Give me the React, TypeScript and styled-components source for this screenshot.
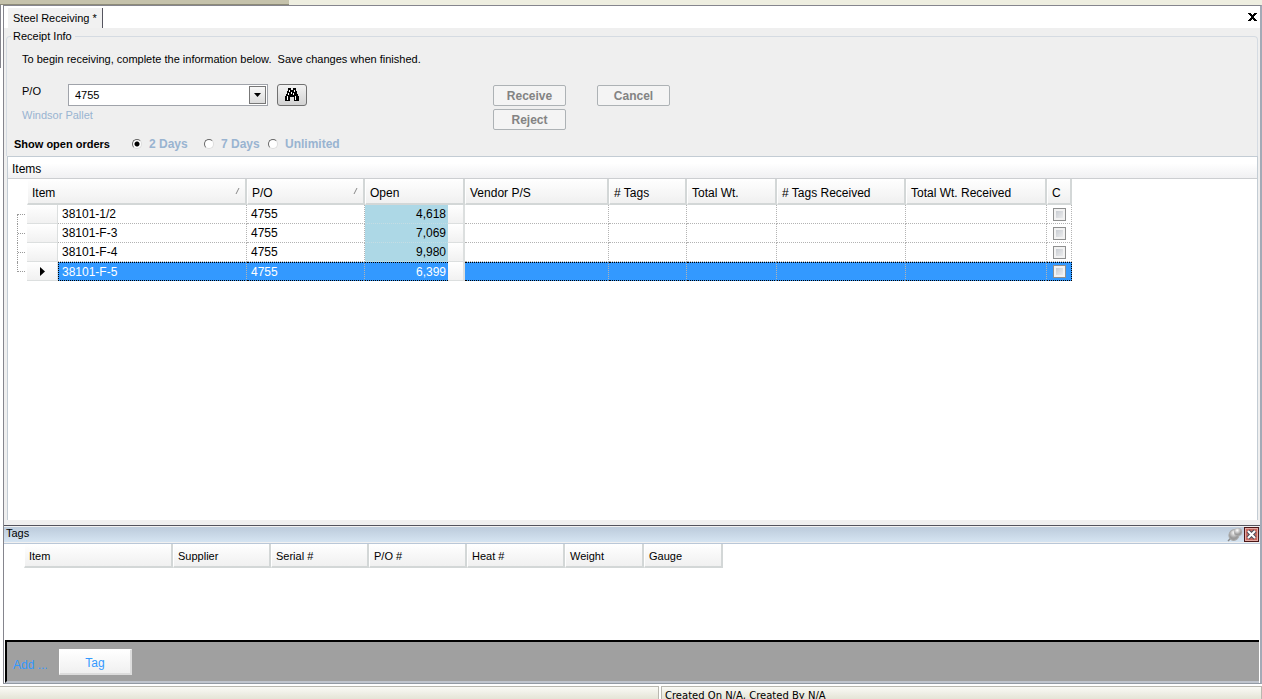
import React from 'react';
import styled, { createGlobalStyle, css } from 'styled-components';

const Global = createGlobalStyle`
  * { box-sizing: border-box; }
  html, body, #root { height: 100%; }
  body { margin: 0; overflow: hidden; background: #fff; color: #000;
    font-family: "Liberation Sans", Arial, sans-serif; font-size: 12px; line-height: 14px; }
  button, input { font: inherit; }
`;

const Page = styled.div`display: flex; flex-direction: column; height: 100vh; min-height: 520px;`;

const TopEdge = styled.div`
  display: flex; flex: none; height: 5px; background: #eeeee0;
  &::before { content: ""; width: 289px; background: #c5c2ab; border-bottom: 1px solid #8d8b78; }
`;

const Workspace = styled.div`display: flex; flex: 1; min-height: 0; background: #fff;`;

const LeftRail = styled.div`
  flex: none; width: 3px;
  &::before { content: ""; display: block; height: 63px; width: 1px; background: #85858d; }
`;

const Frame = styled.main`
  flex: 1; min-width: 0; display: flex; flex-direction: column; background: #efefef;
  border: 1px solid #85858d; border-right: 2px solid #a3aab6; border-bottom-color: #929aa4;
`;

const TabStrip = styled.nav`
  flex: none; display: flex; justify-content: space-between; align-items: stretch;
  height: 22px; background: #fff; padding: 2px 1px 0 4px;
`;

const Tab = styled.button`
  border: 0; border-right: 1px solid #55555f; background: #f1f1f1; padding: 0 5px; font-size: 11px; color: #000;
`;

const CloseTab = styled.button`
  border: 0; background: none; width: 14px; padding: 0 0 3px; display: grid; place-items: center;
`;

const ReceiptInfo = styled.fieldset`
  flex: none; margin: 0 2px; padding: 0 0 4px; border: 1px solid #d5dbe2; border-bottom: 0;
  border-radius: 4px 4px 0 0; min-width: 0; font-size: 11px;
`;

const Legend = styled.legend`margin-left: 4px; padding: 0 3px 0 2px; height: 16px; line-height: 16px;`;

const Intro = styled.p`margin: 0; padding: 8px 0 0 15px; white-space: pre;`;

const EntryRow = styled.div`display: flex; padding: 18px 15px 0; height: 70px;`;

const OrderLabel = styled.div`
  width: 46px; white-space: nowrap;
  label { display: block; }
`;

const Supplier = styled.div`color: #99b4d1; margin-top: 10px;`;

const Combo = styled.div`
  display: flex; width: 200px; height: 22px; border: 1px solid #a0a3aa; background: #fff; padding: 1px;
  input { flex: 1; min-width: 0; border: 0; outline: 0; padding: 0 5px; background: none; }
`;

const Drop = styled.button`
  width: 17px; padding: 0; border: 1px solid #777; background: linear-gradient(#f8f8f8, #dcdcdc);
  display: grid; place-items: center;
`;

const Find = styled.button`
  margin-left: 9px; width: 30px; height: 22px; padding: 0; border: 1px solid #707070; border-radius: 3px;
  background: linear-gradient(#f2f2f2, #d2d2d2); display: grid; place-items: center;
`;

const Commands = styled.div`
  margin-left: 186px; padding-top: 1px; display: grid; grid-template-columns: 73px 73px; column-gap: 31px; row-gap: 3px;
  align-content: start;
`;

const Command = styled.button`
  height: 21px; padding: 0; border: 1px solid #adb2b5; border-radius: 2px; background: #f4f4f4;
  color: #838383; font-size: 12px; font-weight: bold;
`;

const OpenOrders = styled.div`
  display: flex; align-items: center; padding-left: 7px; height: 16px; font-weight: bold;
`;

const OpenTitle = styled.span`width: 118px;`;

const RadioLabel = styled.label<{ $width: number }>`
  display: flex; align-items: center; gap: 7px; width: ${p => p.$width}px; color: #99b4d1; white-space: nowrap;
  font-size: 12px;
  input {
    appearance: none; margin: 0; width: 10px; height: 10px; border-radius: 50%; background: #fff;
    border: 1px solid; border-color: #666 #ddd #ddd #666;
  }
  input:checked { background: radial-gradient(circle, #000 0 2px, #fff 3px); }
`;

const ItemsPanel = styled.section`
  flex: 1; min-height: 0; margin: 0 2px 0 3px; border: 1px solid #c3ccd4; border-bottom: 0; background: #fff;
  overflow: hidden;
`;

const PanelTitle = styled.h2`
  margin: 0; height: 22px; padding: 5px 4px 0; font-size: 12px; line-height: 14px; font-weight: normal;
  background: linear-gradient(#fff 30%, #f0f0f2); border-bottom: 1px solid #ccced1;
`;

const header = css`
  font-weight: normal; text-align: left; white-space: nowrap;
  background: linear-gradient(#fff, #f0f0f0); border: solid #d3d7d7; border-width: 0 2px 2px 0;
  border-left: 1px solid #fff;
`;

const ItemsTable = styled.table`
  border-collapse: separate; border-spacing: 0; table-layout: fixed; width: 1064px;
  th { ${header} height: 26px; padding: 4px 4px 0; }
  th:first-child, td:first-child { background: none; border: 0; padding: 0; }
`;

const SortableLabel = styled.span`
  display: flex; justify-content: space-between; align-items: center;
  svg { margin-bottom: 4px; }
`;

const ItemRow = styled.tr<{ $selected?: boolean }>`
  height: 19px;
  td {
    padding: 0 4px; height: 19px; line-height: 16px; font-size: 12px;
    border-right: 1px dotted #b3b3b3; border-bottom: 1px dotted #b3b3b3;
  }
  ${p => p.$selected && css`
    color: #fff;
    td { background: #3399ff; border-top: 1px dotted #000; border-bottom: 1px dotted #000; }
    td:nth-child(3) { border-left: 1px dotted #000; padding-left: 3px; }
    td:last-child { border-right-color: #000; }
  `}
`;

const TreeCell = styled.td`vertical-align: top;`;

const Branch = styled.span<{ $first?: boolean; $last?: boolean }>`
  display: block; margin-left: 9px; width: 9px;
  margin-top: ${p => (p.$first ? 9 : 0)}px;
  height: ${p => (p.$first || p.$last ? 10 : 19)}px;
  border-left: 1px dotted #999;
  background: linear-gradient(90deg, #999 50%, transparent 50%) 0 ${p => (p.$first ? 0 : 9)}px / 2px 1px repeat-x;
`;

const Selector = styled.td`
  && { background: linear-gradient(#fff, #f1f1f1); border: solid #dcdfdf; border-width: 0 1px 1px 0; padding: 0; }
  svg { display: block; margin: 0 auto; }
`;

const OpenCell = styled.td<{ $selected?: boolean }>`
  &&& {
    text-align: right; border-right: 0; padding: 0 2px 0 0;
    ${p => !p.$selected && 'background: #add8e6; border-bottom-color: #c5dde4;'}
  }
`;

const StubCell = styled.td`
  &&& { background: linear-gradient(#fff, #f1f1f1); border: solid #dcdfdf; border-width: 0 2px 1px 0; }
`;

const CheckCell = styled.td`
  && { padding: 0; }
  input {
    appearance: none; display: block; width: 13px; height: 13px; margin: 0 auto; border: 1px solid #8e8f8f;
    background: linear-gradient(135deg, #bfc4cb, #f4f4f4); box-shadow: inset 0 0 0 2px #f2f2f2;
  }
`;

const Dock = styled.section`flex: none; margin-top: 5px; border-top: 1px solid #53535d; background: #fff;`;

const DockTitle = styled.div`
  display: flex; align-items: center; height: 17px; padding-right: 1px; border: solid #f1f1f1; border-width: 1px 0;
  background: linear-gradient(#bccbdb, #d5e4f2);
  h2 { flex: 1; margin: 0; padding: 0 2px 2px; font-size: 11px; line-height: 13px; font-weight: normal; }
`;

const DockButton = styled.button`
  border: 0; background: none; padding: 0; width: 16px; height: 15px; display: grid; place-items: center;
`;

const DockBody = styled.div`height: 97px; border-top: 1px solid #b9c7d8; padding-left: 20px;`;

const TagTable = styled.table`
  border-collapse: separate; border-spacing: 0; table-layout: fixed; width: 699px;
  th { ${header} height: 24px; padding: 1px 4px 0; font-size: 11px; }
`;

const AddBar = styled.div`
  display: flex; height: 43px; margin: 0 1px; padding: 7px 6px 0; background: #a0a0a0; color: #3399ff;
  border: solid #000; border-width: 2px 0 0 2px; border-bottom: 2px solid #c0c5ce;
`;

const AddText = styled.span`width: 46px; padding-top: 9px;`;

const TagButton = styled.button`
  width: 73px; height: 26px; border: 1px solid #fff; border-right: 2px solid #ddd; border-bottom: 2px solid #ddd;
  background: linear-gradient(#fff, #f0f0f0); color: #3399ff; padding: 3px 0 0;
`;

const StatusBar = styled.footer`
  flex: none; display: flex; gap: 2px; height: 15px; padding-top: 2px; background: #fff; overflow: hidden;
  font-family: "DejaVu Sans", sans-serif; font-size: 10px; line-height: 18px;
`;

const StatusPane = styled.div<{ $grow?: boolean }>`
  ${p => (p.$grow ? 'flex: 1;' : 'width: 659px;')} height: 20px; padding-left: 3px;
  background: linear-gradient(#fafaf6, #e4e4d6 12px); border: solid #b9b8b0;
  border-width: 1px 1px 0 ${p => (p.$grow ? 1 : 0)}px;
`;

const itemColumns = [
  { label: '' }, { label: 'Item', span: 2, sort: true }, { label: 'P/O', sort: true },
  { label: 'Open', span: 2 }, { label: 'Vendor P/S' }, { label: '# Tags' }, { label: 'Total Wt.' },
  { label: '# Tags Received' }, { label: 'Total Wt. Received' }, { label: 'C' },
];
const itemWidths = [19, 31, 189, 118, 83, 17, 144, 78, 90, 129, 141, 25];
const items = [
  ['38101-1/2', '4755', '4,618'], ['38101-F-3', '4755', '7,069'],
  ['38101-F-4', '4755', '9,980'], ['38101-F-5', '4755', '6,399'],
];
const tagColumns = [
  ['Item', 149], ['Supplier', 98], ['Serial #', 98], ['P/O #', 98], ['Heat #', 98], ['Weight', 79], ['Gauge', 79],
] as const;
const periods = [['2 Days', 72], ['7 Days', 64], ['Unlimited', 90]] as const;

const Cross = () => (
  <svg width="9" height="8" viewBox="0 0 9 8" shapeRendering="crispEdges">
    <path d="M0 0h3l1.5 2L6 0h3L6 4l3 4H6L4.5 6L3 8H0l3-4z" fill="#000" />
  </svg>
);

const Binoculars = () => (
  <svg width="16" height="14" viewBox="0 0 16 14" shapeRendering="crispEdges">
    <path d="M4 0h3v2h2V0h3v3h1v3h1v2h1v5h-5V9H6v4H1V8h1V6h1V3h1z" fill="#000" />
    <path d="M5 2h1v2H5zM10 2h1v2h-1zM4 5h1v2H4zM9 5h1v2H9zM3 8h1v4H3zM11 8h1v4h-1zM7 4h1v2H7z" fill="#fff" />
  </svg>
);

const Pin = () => (
  <svg width="16" height="15" viewBox="0 0 16 15">
    <defs>
      <radialGradient id="pinHead" cx="0.4" cy="0.3">
        <stop offset="0" stopColor="#fff" /><stop offset="1" stopColor="#9a9a9a" />
      </radialGradient>
    </defs>
    <path d="M1 14l4-4" stroke="#888" strokeWidth="1.5" />
    <ellipse cx="7" cy="8" rx="5" ry="5.5" transform="rotate(25 7 8)" fill="url(#pinHead)" stroke="#aaa" />
    <circle cx="11" cy="5" r="4" fill="url(#pinHead)" stroke="#bbb" strokeWidth="0.5" />
  </svg>
);

const RedClose = () => (
  <svg width="15" height="15" viewBox="0 0 15 15">
    <rect x="0.5" y="0.5" width="14" height="14" fill="#c9685f" stroke="#4a1717" />
    <rect x="1.5" y="1.5" width="12" height="12" fill="none" stroke="#e3aaa4" />
    <path d="M4 4l7 7M11 4l-7 7" stroke="#4d4d5c" strokeWidth="4" />
    <path d="M4 4l7 7M11 4l-7 7" stroke="#fff" strokeWidth="2" />
  </svg>
);

const SortMark = () => (
  <svg width="6" height="8" viewBox="0 0 6 8"><path d="M1 7l3-6" stroke="#888" fill="none" /></svg>
);

export default function App() {
  return (
    <Page>
      <Global />
      <TopEdge />
      <Workspace>
        <LeftRail />
        <Frame>
          <TabStrip>
            <Tab type="button">Steel Receiving *</Tab>
            <CloseTab type="button" aria-label="Close"><Cross /></CloseTab>
          </TabStrip>
          <ReceiptInfo>
            <Legend>Receipt Info</Legend>
            <Intro>To begin receiving, complete the information below.  Save changes when finished.</Intro>
            <EntryRow>
              <OrderLabel>
                <label htmlFor="po">P/O</label>
                <Supplier>Windsor Pallet</Supplier>
              </OrderLabel>
              <Combo>
                <input id="po" defaultValue="4755" />
                <Drop type="button" aria-label="Choose P/O">
                  <svg width="7" height="4" viewBox="0 0 7 4"><path d="M0 0h7L3.5 4z" /></svg>
                </Drop>
              </Combo>
              <Find type="button" aria-label="Find"><Binoculars /></Find>
              <Commands>
                <Command type="button">Receive</Command>
                <Command type="button">Cancel</Command>
                <Command type="button">Reject</Command>
              </Commands>
            </EntryRow>
            <OpenOrders role="radiogroup" aria-labelledby="open-orders">
              <OpenTitle id="open-orders">Show open orders</OpenTitle>
              {periods.map(([label, width], i) => (
                <RadioLabel key={label} $width={width}>
                  <input type="radio" name="period" defaultChecked={i === 0} />{label}
                </RadioLabel>
              ))}
            </OpenOrders>
          </ReceiptInfo>
          <ItemsPanel>
            <PanelTitle>Items</PanelTitle>
            <ItemsTable>
              <colgroup>{itemWidths.map((w, i) => <col key={i} width={w} />)}</colgroup>
              <thead>
                <tr>
                  {itemColumns.map(c => (
                    <th key={c.label} colSpan={c.span}>
                      {c.sort ? <SortableLabel>{c.label}<SortMark /></SortableLabel> : c.label}
                    </th>
                  ))}
                </tr>
              </thead>
              <tbody>
                {items.map(([item, po, open], i) => {
                  const selected = i === items.length - 1;
                  return (
                    <ItemRow key={item} $selected={selected}>
                      <TreeCell><Branch $first={i === 0} $last={selected} /></TreeCell>
                      <Selector>
                        {selected && <svg width="5" height="9" viewBox="0 0 5 9"><path d="M0 0l5 4.5L0 9z" /></svg>}
                      </Selector>
                      <td>{item}</td>
                      <td>{po}</td>
                      <OpenCell $selected={selected}>{open}</OpenCell>
                      <StubCell />
                      <td /><td /><td /><td /><td />
                      <CheckCell><input type="checkbox" aria-label={`Complete ${item}`} /></CheckCell>
                    </ItemRow>
                  );
                })}
              </tbody>
            </ItemsTable>
          </ItemsPanel>
          <Dock>
            <DockTitle>
              <h2>Tags</h2>
              <DockButton type="button" aria-label="Pin"><Pin /></DockButton>
              <DockButton type="button" aria-label="Close tags"><RedClose /></DockButton>
            </DockTitle>
            <DockBody>
              <TagTable>
                <colgroup>{tagColumns.map(([label, w]) => <col key={label} width={w} />)}</colgroup>
                <thead><tr>{tagColumns.map(([label]) => <th key={label}>{label}</th>)}</tr></thead>
              </TagTable>
            </DockBody>
            <AddBar><AddText>Add ...</AddText><TagButton type="button">Tag</TagButton></AddBar>
          </Dock>
        </Frame>
      </Workspace>
      <StatusBar>
        <StatusPane />
        <StatusPane $grow>Created On N/A, Created By N/A</StatusPane>
      </StatusBar>
    </Page>
  );
}
